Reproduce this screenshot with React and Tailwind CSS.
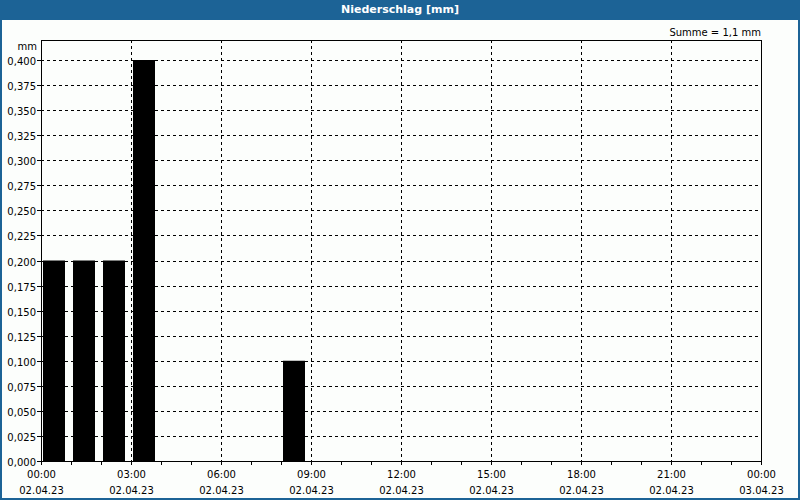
export default function App() {
  const yl = [];
  for (let i = 0; i <= 16; i++) yl.push(i);
  const fmt = (i) => "0," + String(i * 25).padStart(3, "0");
  const xs = [0, 1, 2, 3, 4, 5, 6, 7, 8];
  const times = ["00:00", "03:00", "06:00", "09:00", "12:00", "15:00", "18:00", "21:00", "00:00"];
  const dates = ["02.04.23", "02.04.23", "02.04.23", "02.04.23", "02.04.23", "02.04.23", "02.04.23", "02.04.23", "03.04.23"];
  const y0 = 461, step = 401 / 16;
  const bars = [[0, 8], [1, 8], [2, 8], [3, 16], [8, 4]];
  return (
    <div className="w-[800px] h-[500px] flex flex-col bg-[#1c6396]" style={{ fontFamily: '"DejaVu Sans", "Liberation Sans", sans-serif' }}>
      <div className="h-[20px] flex items-center justify-center text-white text-[11px] font-bold">Niederschlag [mm]</div>
      <div className="flex-1 mx-[2px] mb-[2px] bg-[#fcfefc]">
        <svg width="796" height="478" className="block" style={{ fontFamily: '"DejaVu Sans", sans-serif' }}>
          <g transform="translate(-2,-20)" fontSize="10" fill="#000">
            <text x="761" y="36" textAnchor="end">Summe = 1,1 mm</text>
            <text x="37" y="50" textAnchor="end">mm</text>
            {bars.map(([h, v], k) => (
              <rect key={k} x={43 + h * 30} y={y0 - v * step} width={22} height={v * step} fill="#000" />
            ))}
            {yl.map((i) => {
              const y = Math.round(y0 - i * step) + 0.5;
              return (
                <g key={i}>
                  {i > 0 && <line x1="41" x2="761" y1={y} y2={y} stroke="#000" strokeDasharray="3 3" />}
                  <line x1="37" x2="41" y1={y} y2={y} stroke="#000" />
                  <text x="36" y={y + 4} textAnchor="end">{fmt(i)}</text>
                </g>
              );
            })}
            {xs.map((i) => {
              const x = 41 + i * 90 + 0.5;
              return (
                <g key={i}>
                  {i > 0 && i < 8 && <line x1={x} x2={x} y1="40" y2="461" stroke="#000" strokeDasharray="3 3" />}
                  <text x={x} y="478" textAnchor="middle">{times[i]}</text>
                  <text x={x} y="494" textAnchor="middle">{dates[i]}</text>
                </g>
              );
            })}
            {Array.from({ length: 25 }, (_, h) => (
              <line key={h} x1={41 + h * 30 + 0.5} x2={41 + h * 30 + 0.5} y1="461" y2="465" stroke="#000" />
            ))}
            <rect x="41.5" y="40.5" width="720" height="421" fill="none" stroke="#000" />
          </g>
        </svg>
      </div>
    </div>
  );
}
